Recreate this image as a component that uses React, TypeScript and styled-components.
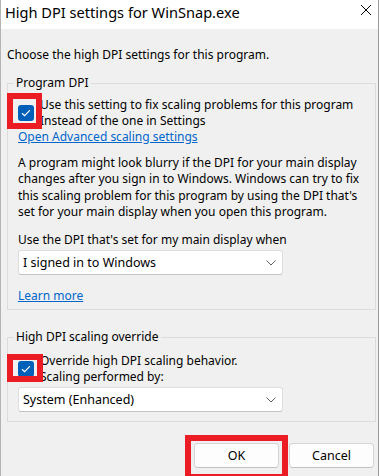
import styled, { createGlobalStyle } from 'styled-components';

const GlobalStyle = createGlobalStyle`
    html, body {
        margin: 0;
        padding: 0;
        background: #ffffff;
    }
    * {
        box-sizing: border-box;
    }
`

const Window = styled.div`
    width: 379px;
    height: 476px;
    overflow: hidden;
    display: flex;
    flex-direction: column;
    background-color: #f0f0f0;
    border-left: 1px solid #b4b4b4;
    border-right: 1px solid #9a9a9a;
    font-family: 'Noto Sans', 'Open Sans', sans-serif;
    font-size: 12px;
    line-height: 16px;
    color: #000;
`
const TitleBar = styled.div`
    height: 29px;
    flex-shrink: 0;
    display: flex;
    justify-content: space-between;
    align-items: flex-start;
    padding: 3px 6px 0 4px;
    background-color: #ffffff;
    font-size: 14.6px;
    line-height: 18px;
`
const CloseButton = styled.div`
    width: 12px;
    height: 12px;
    margin-top: 1px;
    display: flex;
    svg {
        display: block;
    }
`
const Body = styled.div`
    flex: 1;
    display: flex;
    flex-direction: column;
    padding: 18px 2px 0 6px;
`
const Intro = styled.p`
    margin: 0 0 12px 0;
`
const Group = styled.fieldset<{ $top: number; $bottom: number }>`
    margin: 0;
    padding: ${props => props.$top}px 10px ${props => props.$bottom}px 10px;
    border: 1px solid #dcdcdc;
    border-radius: 0;
    display: flex;
    flex-direction: column;
    align-items: flex-start;
    & + & {
        margin-top: 19px;
    }
`
const Legend = styled.legend`
    padding: 0 2px;
    margin-left: -4px;
    line-height: 16px;
`
const CheckRow = styled.div`
    display: flex;
    align-items: center;
    gap: 6px;
`
const BoxWrap = styled.div`
    position: relative;
    flex-shrink: 0;
    width: 16px;
    height: 16px;
`
const CheckBox = styled.div`
    width: 16px;
    height: 16px;
    border-radius: 3px;
    background-color: #005fb8;
    display: flex;
    align-items: center;
    justify-content: center;
`
const Highlight = styled.div<{ $t: number; $r: number; $b: number; $l: number }>`
    position: absolute;
    top: ${props => -props.$t}px;
    right: ${props => -props.$r}px;
    bottom: ${props => -props.$b}px;
    left: ${props => -props.$l}px;
    border: 6px solid #ec1c24;
    pointer-events: none;
`
const Label = styled.div`
    display: flex;
    flex-direction: column;
`
const Link = styled.a`
    color: #0066cc;
    text-decoration: underline;
    cursor: pointer;
`
const Paragraph = styled.p`
    margin: 10px 0 0 0;
    line-height: 16.3px;
`
const Caption = styled.div<{ $gap: number }>`
    margin-top: ${props => props.$gap}px;
`
const Select = styled.div`
    width: 265px;
    height: 25px;
    margin-top: 2px;
    display: flex;
    align-items: center;
    justify-content: space-between;
    padding: 0 6px 0 4px;
    background-color: #ffffff;
    border: 1px solid #dedede;
    border-bottom-color: #c4c4c4;
    border-radius: 3px;
    font-size: 12.5px;
`
const Footer = styled.div`
    display: flex;
    justify-content: flex-end;
    gap: 10px;
    margin-top: 21px;
    padding-right: 2px;
`
const ButtonWrap = styled.div`
    position: relative;
`
const Button = styled.div`
    width: 85px;
    height: 25px;
    display: flex;
    align-items: center;
    justify-content: center;
    background-color: #fdfdfd;
    border: 1px solid #d5d5d5;
    border-bottom-color: #c2c2c2;
    border-radius: 4px;
    font-size: 12.5px;
`

const Check = () => (
    <svg width="10" height="8" viewBox="0 0 10 8">
        <path d="M1 4.2 L3.6 6.6 L9 1.2" fill="none" stroke="#ffffff" strokeWidth="1.2" />
    </svg>
)

const Chevron = () => (
    <svg width="10" height="6" viewBox="0 0 10 6">
        <path d="M0.5 0.5 L5 5 L9.5 0.5" fill="none" stroke="#5f5f5f" strokeWidth="1" />
    </svg>
)

const App = () => {
    return (
        <>
            <GlobalStyle />
            <Window>
                <TitleBar>
                    <span>High DPI settings for WinSnap.exe</span>
                    <CloseButton>
                        <svg width="12" height="12" viewBox="0 0 12 12">
                            <path d="M1 1 L11 11 M11 1 L1 11" stroke="#000" strokeWidth="1" />
                        </svg>
                    </CloseButton>
                </TitleBar>

                <Body>
                    <Intro>Choose the high DPI settings for this program.</Intro>

                    <Group $top={6} $bottom={5}>
                        <Legend>Program DPI</Legend>
                        <CheckRow>
                            <BoxWrap>
                                <CheckBox><Check /></CheckBox>
                                <Highlight $t={12} $r={8} $b={8} $l={11} />
                            </BoxWrap>
                            <Label>
                                <span>Use this setting to fix scaling problems for this program</span>
                                <span>Instead of the one in Settings</span>
                            </Label>
                        </CheckRow>
                        <Link>Open Advanced scaling settings</Link>
                        <Paragraph>
                            A program might look blurry if the DPI for your main display<br />
                            changes after you sign in to Windows. Windows can try to fix<br />
                            this scaling problem for this program by using the DPI that's<br />
                            set for your main display when you open this program.
                        </Paragraph>
                        <Caption $gap={12}>Use the DPI that's set for my main display when</Caption>
                        <Select>
                            <span>I signed in to Windows</span>
                            <Chevron />
                        </Select>
                        <Caption $gap={13}>
                            <Link>Learn more</Link>
                        </Caption>
                    </Group>

                    <Group $top={8} $bottom={9}>
                        <Legend>High DPI scaling override</Legend>
                        <CheckRow>
                            <BoxWrap>
                                <CheckBox><Check /></CheckBox>
                                <Highlight $t={7} $r={9} $b={5} $l={11} />
                            </BoxWrap>
                            <Label>
                                <span>Override high DPI scaling behavior.</span>
                                <span>Scaling performed by:</span>
                            </Label>
                        </CheckRow>
                        <Select>
                            <span>System (Enhanced)</span>
                            <Chevron />
                        </Select>
                    </Group>

                    <Footer>
                        <ButtonWrap>
                            <Button>OK</Button>
                            <Highlight $t={8} $r={9} $b={12} $l={9} />
                        </ButtonWrap>
                        <Button>Cancel</Button>
                    </Footer>
                </Body>
            </Window>
        </>
    )
}

export default App;
